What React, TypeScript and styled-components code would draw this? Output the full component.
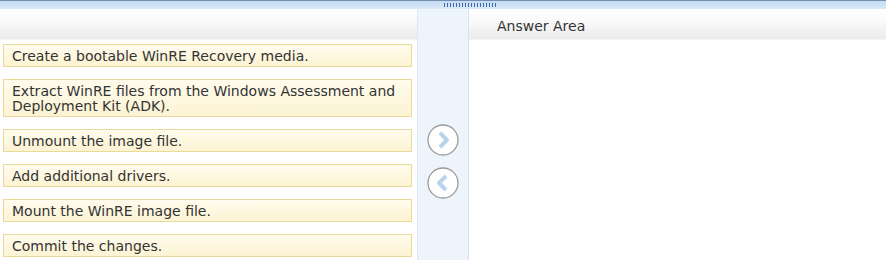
import React from "react";
import styled, { createGlobalStyle } from "styled-components";

const Global = createGlobalStyle`
  html, body { margin: 0; padding: 0; background: #ffffff; }
  body { font-family: Verdana, "DejaVu Sans", sans-serif; color: #333333; }
`;

const Page = styled.div`
  width: 886px;
  height: 260px;
  overflow: hidden;
  display: flex;
  flex-direction: column;
`;

const TopBar = styled.div`
  height: 8px;
  border-top: 1px solid #7290b0;
  background: linear-gradient(#c4dbf4, #dbe9f8);
  display: flex;
  padding-left: 443px;
  align-items: flex-start;
`;

const Grip = styled.div`
  width: 54px;
  height: 4px;
  margin-top: 2px;
  background-image: radial-gradient(circle, #3a68a8 0.9px, transparent 1.1px);
  background-size: 3px 2px;
`;

const Body = styled.div`
  flex: 1;
  display: grid;
  grid-template-columns: 417px 52px 1fr;
`;

const Column = styled.div`
  display: flex;
  flex-direction: column;
`;

const Header = styled.div`
  height: 31px;
  box-sizing: border-box;
  background: linear-gradient(#ffffff, #fafafa 40%, #ebebeb);
  border-bottom: 1px solid #f3f3f3;
  display: flex;
  align-items: center;
  padding: 3px 0 0 28px;
  font-size: 14px;
  color: #333333;
`;

const List = styled.div`
  display: flex;
  flex-direction: column;
  gap: 12px;
  padding: 4px 5px 0 3px;
`;

const Item = styled.div`
  border: 1px solid #e9d99a;
  background: linear-gradient(#fffcee, #fcf3d2);
  padding: 4px 8px 2px;
  font-size: 14px;
  line-height: 15px;
  color: #333333;
`;

const Middle = styled.div`
  background: #eef4fc;
  border-left: 1px solid #dde8f6;
  border-right: 1px solid #d3e2f4;
  display: flex;
  flex-direction: column;
  align-items: center;
  padding-top: 115px;
  gap: 11px;
`;

const ArrowButton = styled.div`
  width: 32px;
  height: 32px;
  display: flex;
  align-items: center;
  justify-content: center;
`;

const Arrow = ({ dir }: { dir: "right" | "left" }) => (
  <ArrowButton>
    <svg width="32" height="32" viewBox="0 0 32 32">
      <circle cx="16" cy="16" r="15" fill="#ffffff" stroke="#9a9a9a" strokeWidth="1.3" />
      <path
        d={dir === "right" ? "M13 9 L20 16 L13 23" : "M19 9 L12 16 L19 23"}
        fill="none"
        stroke="#b8d3ee"
        strokeWidth="4"
        strokeLinejoin="round"
      />
    </svg>
  </ArrowButton>
);

const items = [
  "Create a bootable WinRE Recovery media.",
  "Extract WinRE files from the Windows Assessment and Deployment Kit (ADK).",
  "Unmount the image file.",
  "Add additional drivers.",
  "Mount the WinRE image file.",
  "Commit the changes.",
];

export default function App() {
  return (
    <Page>
      <Global />
      <TopBar>
        <Grip />
      </TopBar>
      <Body>
        <Column>
          <Header />
          <List>
            {items.map((t) => (
              <Item key={t}>{t}</Item>
            ))}
          </List>
        </Column>
        <Middle>
          <Arrow dir="right" />
          <Arrow dir="left" />
        </Middle>
        <Column>
          <Header>Answer Area</Header>
        </Column>
      </Body>
    </Page>
  );
}
